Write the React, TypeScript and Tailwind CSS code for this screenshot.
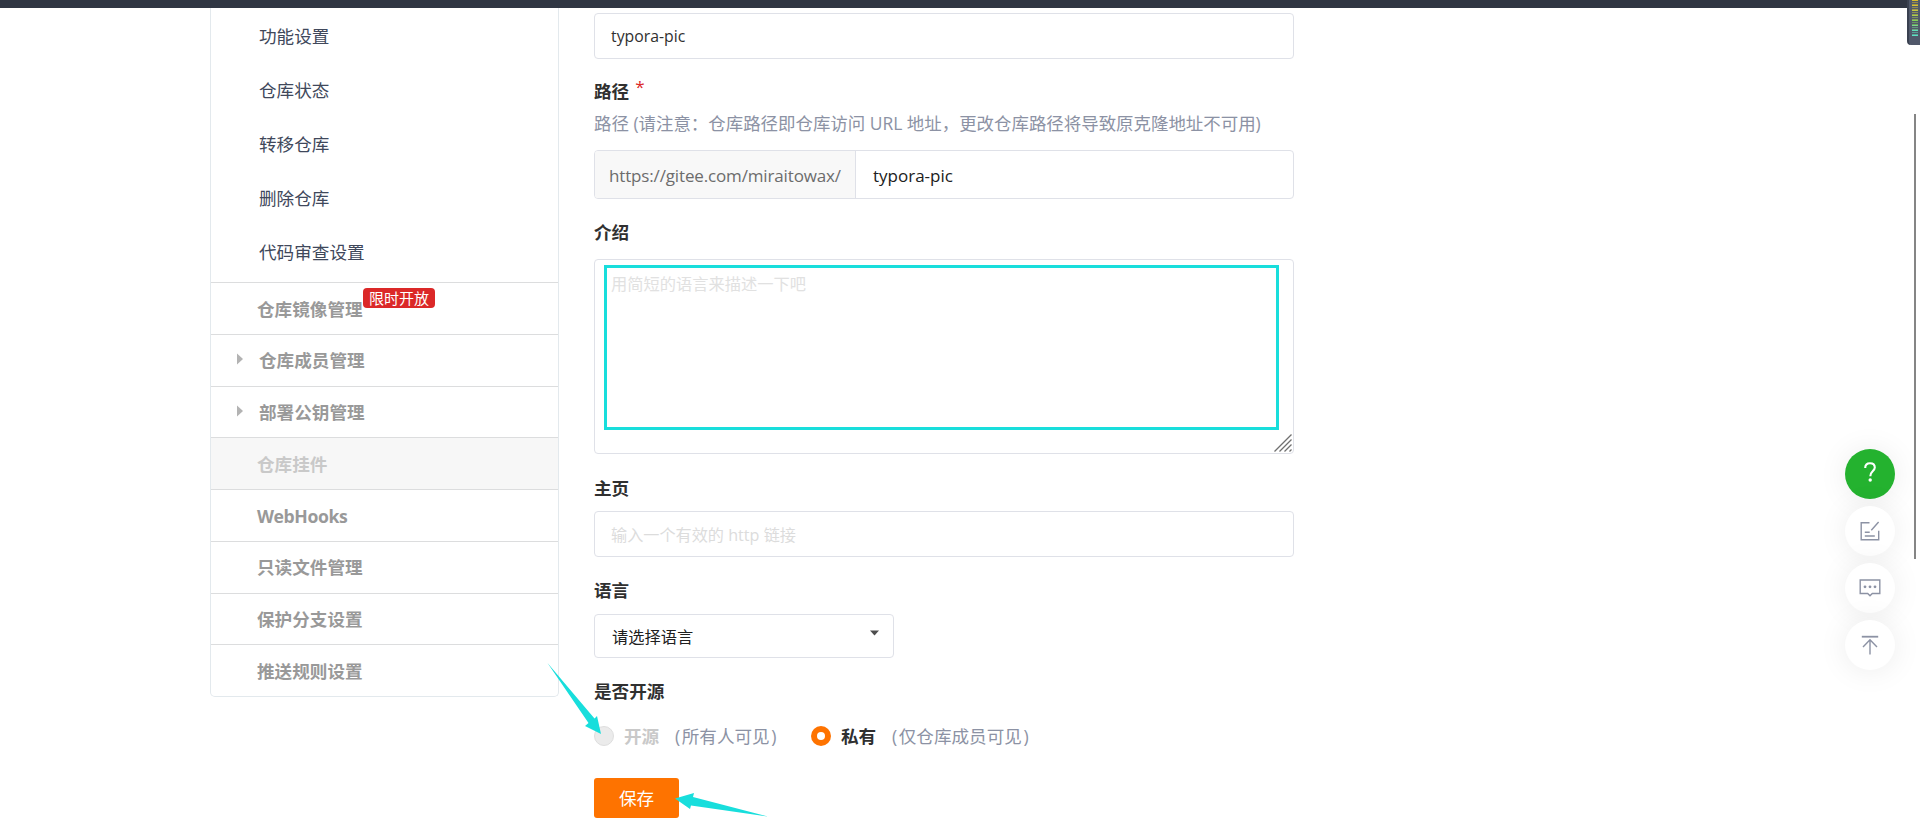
/* ===================================================================
   Repository Settings Page
   Side menu, basic info form and the floating helper buttons
   =================================================================== */

import React from 'react';

const FONT = "font-['Open_Sans','Noto_Sans_CJK_SC',sans-serif]";

const subItems = ['功能设置', '仓库状态', '转移仓库', '删除仓库', '代码审查设置'];

interface Section {
  label: string;
  badge?: string;
  caret?: boolean;
  disabled?: boolean;
}

const sections: Section[] = [
  { label: '仓库镜像管理', badge: '限时开放' },
  { label: '仓库成员管理', caret: true },
  { label: '部署公钥管理', caret: true },
  { label: '仓库挂件', disabled: true },
  { label: 'WebHooks' },
  { label: '只读文件管理' },
  { label: '保护分支设置' },
  { label: '推送规则设置' },
];

const meterColors = ['#d8bd2a', '#d3c234', '#c6cb40', '#a9d04c', '#84d456', '#79d78c', '#5fe0b8', '#5ce0c4'];

function SideMenu() {
  return (
    <aside className="flex h-[689px] w-[349px] flex-col rounded-b-[5px] border border-t-0 border-[#e3e9ed]">
      <ul className="h-[274px] shrink-0 pt-px">
        {subItems.map((item) => (
          <li key={item} className="flex h-[54px] items-center pl-12 text-[17.6px] text-[#40485b]">
            {item}
          </li>
        ))}
      </ul>
      {sections.map((s) => (
        <SideSection key={s.label} {...s} />
      ))}
    </aside>
  );
}

function SideSection({ label, badge, caret, disabled }: Section) {
  return (
    <div
      className={`relative flex flex-1 items-center border-t border-[#dcddde] pt-px text-[17.6px] font-bold ${
        disabled ? 'bg-[#f7f7f7] text-[#c9c9c9]' : 'text-[#999]'
      } ${caret ? 'pl-12' : 'pl-[46px]'}`}
    >
      {caret && (
        <svg className="absolute left-[26px] top-[18px]" width="6" height="12" viewBox="0 0 6 12">
          <path d="M0 0.5L6 6L0 11.5Z" fill="#b3b3b3" />
        </svg>
      )}
      <span className={label === 'WebHooks' ? 'tracking-[-0.4px]' : ''}>{label}</span>
      {badge && (
        <span className="absolute left-[152px] top-[5px] flex h-5 w-[72px] items-center justify-center rounded-[4px] bg-[#db2828] text-[15px] font-normal text-white">
          {badge}
        </span>
      )}
    </div>
  );
}

function Label({ children, className = '' }: { children: React.ReactNode; className?: string }) {
  return (
    <div className={`flex h-6 items-center text-[17.6px] font-bold text-[#303030] ${className}`}>
      {children}
    </div>
  );
}

function SettingsForm() {
  return (
    <main className="ml-[35px] flex w-[700px] flex-col pt-[5px]">
      <div className="flex h-[46px] items-center rounded-[4px] border border-[#dfe1e8] pl-4 pt-0.5 text-[15.8px] text-[#303030]">
        typora-pic
      </div>

      <Label className="mt-5">
        路径
        <span className="-mt-2 ml-[6px] text-[17px] font-normal text-[#db2828]">*</span>
      </Label>
      <div className="mt-2 flex h-6 items-center whitespace-nowrap text-[17.45px] text-[#8c92a4]">
        路径 (请注意：仓库路径即仓库访问 URL 地址，更改仓库路径将导致原克隆地址不可用)
      </div>

      <div className="mt-[15px] flex h-[49px] rounded-[4px] border border-[#dfe1e8] pt-px text-[17px]">
        <div className="-mt-px flex w-[260px] items-center rounded-l-[3px] bg-[#f8f8f8] pl-3.5 pt-0.5 tracking-[-0.15px] text-[#6c6c6c]">
          https://gitee.com/miraitowax/
        </div>
        <div className="-mt-px flex flex-1 items-center border-l border-[#dfe1e8] pl-[17px] pt-0.5 text-[#202020]">
          typora-pic
        </div>
      </div>

      <Label className="mt-[21px]">介绍</Label>
      <div className="relative mt-[15px] h-[195px] rounded-[4px] border border-[#dfe1e8] pl-4 pt-[12px] text-[16.25px] leading-6 text-[#e1e1e1]">
        用简短的语言来描述一下吧
        <div className="absolute left-[9px] top-[5px] h-[165px] w-[675px] border-[3px] border-[#18dedc]" />
        <svg className="absolute bottom-px right-px" width="18" height="18" viewBox="0 0 18 18">
          <path d="M0.5 17.5L17.5 0.5M5.5 17.5L17.5 5.5M10.5 17.5L17.5 10.5M15.5 17.5L17.5 15.5" stroke="#707070" strokeWidth="1.3" />
        </svg>
      </div>

      <Label className="mt-[22px]">主页</Label>
      <div className="mt-[11px] flex h-[46px] items-center rounded-[4px] border border-[#dfe1e8] pl-4 pt-[3px] text-[16.15px] text-[#dcdcdc]">
        输入一个有效的 http 链接
      </div>

      <Label className="mt-[21px]">语言</Label>
      <div className="mt-3 flex h-11 w-[300px] items-center justify-between rounded-[4px] border border-[#dfe1e8] pl-[17px] pr-3.5 pt-0.5 text-[16.25px] text-[#202020]">
        请选择语言
        <svg className="-mt-2" width="9" height="6" viewBox="0 0 9 6">
          <path d="M0 0.5H9L4.5 5.5Z" fill="#4d4d4d" />
        </svg>
      </div>

      <Label className="mt-[21px]">是否开源</Label>
      <div className="mt-[21px] flex h-6 items-center whitespace-nowrap text-[17.6px] text-[#8c92a4]">
        <span className="size-5 rounded-full border border-[#dedede] bg-[#ebebeb]" />
        <b className="ml-2.5 w-[51px] text-[#c9c9c9]">开源</b>
        <span className="w-[136px]">
          (<span className="px-[1.5px]">所有人可见</span>)
        </span>
        <span className="flex size-5 items-center justify-center rounded-full bg-[#fe7300]">
          <span className="size-2 rounded-full bg-white" />
        </span>
        <b className="ml-2.5 w-[51px] text-[#303030]">私有</b>
        <span>
          (<span className="px-[1.5px]">仅仓库成员可见</span>)
        </span>
      </div>

      <button className="mt-[30px] h-10 w-[85px] rounded-[3px] bg-[#fe7300] text-[17.6px] text-white">保存</button>
    </main>
  );
}

function FloatButton({ children, primary = false }: { children: React.ReactNode; primary?: boolean }) {
  return (
    <div
      className={`flex size-[50px] items-center justify-center rounded-full shadow-[0_1px_30px_rgba(0,0,0,0.08)] ${
        primary ? 'bg-[#24b22f]' : 'bg-white'
      }`}
    >
      {children}
    </div>
  );
}

function FloatButtons() {
  return (
    <div className="absolute left-[1845px] top-[449px] flex flex-col gap-[7px]">
      <FloatButton primary>
        <svg className="-mt-1" width="12" height="20" viewBox="0 0 12 20" fill="none">
          <path d="M1.2 6C1.2 3 3 1.2 6 1.2S10.8 3 10.8 5.6C10.8 9 6.3 9.3 6.3 14.2" stroke="#fff" strokeWidth="2.1" />
          <circle cx="6.2" cy="18" r="1.7" fill="#fff" />
        </svg>
      </FloatButton>
      <FloatButton>
        <svg width="20" height="20" viewBox="0 0 20 20" fill="none" stroke="#8c92a4" strokeWidth="1.4">
          <path d="M9.5 1.7H1.2V18.8H18.7V9.8M18.6 1L11.3 9.3M4.8 11.3H9.7M4.8 15H14.8" />
        </svg>
      </FloatButton>
      <FloatButton>
        <svg width="22" height="18" viewBox="0 0 22 18" fill="none" stroke="#8c92a4" strokeWidth="1.4">
          <path d="M1.2 1H20.8V14.5H13.3L11 16.8L8.7 14.5H1.2Z" />
          <g fill="#8c92a4" stroke="none">
            <circle cx="6" cy="7.8" r="1.4" />
            <circle cx="11" cy="7.8" r="1.4" />
            <circle cx="16" cy="7.8" r="1.4" />
          </g>
        </svg>
      </FloatButton>
      <FloatButton>
        <svg width="18" height="20" viewBox="0 0 18 20" fill="none" stroke="#8c92a4" strokeWidth="1.4">
          <path d="M9 19.5V5M2 12L9 4.8L16 12" />
          <path d="M0.8 1.7H17.2" strokeWidth="1.8" />
        </svg>
      </FloatButton>
    </div>
  );
}

export default function App() {
  return (
    <div className={`relative h-[823px] w-[1920px] overflow-hidden bg-white ${FONT}`}>
      <header className="h-2 bg-[#303643]" />
      <div className="flex items-start pl-[210px]">
        <SideMenu />
        <SettingsForm />
      </div>

      {/* Pointer arrows */}
      <svg className="absolute left-[540px] top-[655px]" width="240" height="168" viewBox="0 0 240 168" fill="#18dedc">
        <path d="M7.5 8L54.5 63.5L57 61L61 79L45 71L48.5 68Z" />
        <path d="M135 143.5L154 138L153 142L228 161.5L151 150.5L150 154Z" />
      </svg>

      <FloatButtons />

      {/* Scrollbar thumb */}
      <div className="absolute left-[1914px] top-[114px] h-[445px] w-0.5 bg-[#858585]" />

      {/* Level meter docked at the screen edge */}
      <div className="absolute right-0 top-0 flex h-[45px] w-[13px] flex-col items-start rounded-bl-[4px] border-l-2 border-[#3a4150] bg-[#50586a] pl-[3px]">
        {meterColors.map((color, i) => (
          <div key={i} className="flex h-[5px] w-1.5 shrink-0 flex-col gap-px last:h-0.5 last:overflow-hidden">
            <span className="h-px shrink-0" style={{ backgroundColor: color }} />
            <span className="h-px shrink-0 opacity-50" style={{ backgroundColor: color }} />
            <span className="h-px shrink-0 opacity-60" style={{ backgroundColor: color }} />
          </div>
        ))}
      </div>
    </div>
  );
}
